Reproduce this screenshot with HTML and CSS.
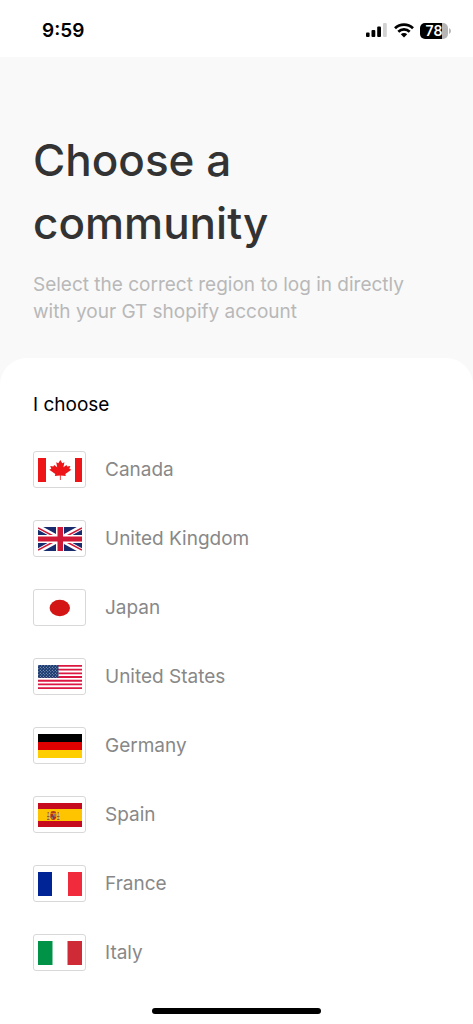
FILE: index.html
```html
<!DOCTYPE html>
<html lang="en">
<head>
<meta charset="utf-8">
<meta name="viewport" content="width=device-width, initial-scale=1">
<title>Choose a community</title>
<link rel="stylesheet" href="styles.css">
</head>
<body>
<div class="screen">
  <div class="status">
    <span class="time">9:59</span>
    <div class="status-icons">
      <svg class="signal" viewBox="0 0 22 15" aria-hidden="true"><rect x="0" y="9.5" width="3.6" height="4.5" rx="1"/><rect x="5.5" y="7" width="3.8" height="7" rx="1"/><rect x="11.2" y="3.5" width="3.8" height="10.5" rx="1"/><rect x="17" y="0" width="3.8" height="14" rx="1" fill="#d2d2d2"/></svg>
      <svg class="wifi" viewBox="0 0 20 15" aria-hidden="true"><g fill="none" stroke="#000" stroke-width="2.7"><path d="M1 5.2C6 .3 14 .3 19 5.2"/><path d="M4.3 8.7C7.5 5.6 12.5 5.6 15.7 8.7"/></g><path d="M6.8 11.2C8.5 9.6 11.5 9.6 13.2 11.2L10 14.5Z"/></svg>
      <div class="battery"><span class="level">78</span></div>
      <svg class="cap" viewBox="0 0 2 6" aria-hidden="true"><path d="M0 0Q2 1 2 3T0 6Z" fill="#b5b5b5"/></svg>
    </div>
  </div>
  <header class="intro">
    <h1>Choose a community</h1>
    <p>Select the correct region to log in directly with your GT shopify account</p>
  </header>
  <main class="panel">
    <h2>I choose</h2>
    <ul class="regions">
      <li><button type="button" class="region"><span class="flag"><svg viewBox="0 0 44 24" aria-hidden="true"><path fill="#ee1519" d="M0 0H8V24H0ZM37 0H44V24H37Z"/><path fill="#ee1519" d="M22.3 2L24.3 5.2 26.4 4.2 25.4 9.3 28.5 6.9 29.2 8.4 32.4 7.9 31.3 10.7 33.3 11.8 27.3 16.1 27.8 18.1 22.7 17.4V22H21.9V17.4L16.8 18.1 17.3 16.1 11.3 11.8 13.3 10.7 12.2 7.9 15.4 8.4 16.1 6.9 19.2 9.3 18.2 4.2 20.3 5.2Z"/></svg></span>Canada</button></li>
      <li><button type="button" class="region"><span class="flag"><svg viewBox="0 0 44 24" aria-hidden="true"><path fill="#172b6d" d="M0 0H44V24H0Z"/><path stroke="#fff" stroke-width="5" d="M0 0L44 24M44 0L0 24"/><path stroke="#cf1835" stroke-width="1.5" d="M0 1L19 11M25 13L44 23M44 1L25 11M19 13L0 23"/><path fill="#fff" d="M18 0H26V8H44V16H26V24H18V16H0V8H18Z"/><path fill="#cf1835" d="M19.5 0H25V9.5H44V14.5H25V24H19.5V14.5H0V9.5H19.5Z"/></svg></span>United Kingdom</button></li>
      <li><button type="button" class="region"><span class="flag"><svg viewBox="0 0 44 24" aria-hidden="true"><ellipse cx="21.8" cy="12" rx="10.2" ry="8.2" fill="#d31515"/></svg></span>Japan</button></li>
      <li><button type="button" class="region"><span class="flag"><svg viewBox="0 0 44 24" aria-hidden="true"><defs><pattern id="stars" width="3" height="3" patternUnits="userSpaceOnUse"><circle cx=".8" cy=".8" r=".5" fill="#c5cde0"/><circle cx="2.3" cy="2.3" r=".5" fill="#c5cde0"/></pattern></defs><path fill="#fff" d="M0 0H44V24H0Z"/><path stroke="#dc1742" stroke-width="1.85" d="M0 .92H44M0 4.62H44M0 8.31H44M0 12H44M0 15.7H44M0 19.4H44M0 23.08H44"/><path fill="#17386f" d="M0 0H20.5V12.9H0Z"/><path fill="url(#stars)" d="M0 0H20.5V12.9H0Z"/></svg></span>United States</button></li>
      <li><button type="button" class="region"><span class="flag"><svg viewBox="0 0 44 24" aria-hidden="true"><path d="M0 0H44V8H0Z"/><path fill="#df0000" d="M0 8H44V16H0Z"/><path fill="#ffce00" d="M0 16H44V24H0Z"/></svg></span>Germany</button></li>
      <li><button type="button" class="region"><span class="flag"><svg viewBox="0 0 44 24" aria-hidden="true"><path fill="#c60b1e" d="M0 0H44V24H0Z"/><path fill="#ffc400" d="M0 6H44V18H0Z"/><g><path stroke="#aaa075" stroke-width="1.2" d="M10.2 10V16M20.3 10V16"/><path stroke="#9c5a28" d="M9 13.5H11.5M19 13.5H21.5M9 16.5H11.5M19 16.5H21.5M9.5 9.7H11M19.5 9.7H21"/><path fill="#b33a22" d="M12.7 10L13 8.6 15.3 8 17.6 8.6 18 10Z"/><path fill="#b52b22" d="M12.4 10.5H18.2V14.5Q17.5 17 15.3 17T12.4 14.5Z"/><path fill="#d4a02a" d="M15.3 10.5H18.2V13.5H15.3Z"/><path fill="#8f7b70" d="M16 11H18V13H16ZM13.3 14H15V16H13.3Z"/><circle cx="15.3" cy="13.5" r="1" fill="#335592"/></g></svg></span>Spain</button></li>
      <li><button type="button" class="region"><span class="flag"><svg viewBox="0 0 44 24" aria-hidden="true"><path fill="#002395" d="M0 0H14V24H0Z"/><path fill="#f12b3c" d="M30 0H44V24H30Z"/></svg></span>France</button></li>
      <li><button type="button" class="region"><span class="flag"><svg viewBox="0 0 44 24" aria-hidden="true"><path fill="#009246" d="M0 0H14.5V24H0Z"/><path fill="#ce2b37" d="M29.5 0H44V24H29.5Z"/></svg></span>Italy</button></li>
    </ul>
  </main>
  <footer class="home-bar"><div class="home"></div></footer>
</div>
</body>
</html>
```
FILE: styles.css
```css
* { box-sizing: border-box; }
body { margin: 0; background: #fff; font-family: Inter, "Liberation Sans", sans-serif; }
.screen { min-height: 100vh; display: flex; flex-direction: column; background: #f9f9f9; }
.status { display: flex; align-items: center; justify-content: space-between; height: 57px; padding: 4px 22px 0 42px; background: #fff; }
.time { font-size: 19px; font-weight: 600; line-height: 24px; }
.status-icons { display: flex; align-items: center; }
.signal { width: 22px; height: 15px; margin-right: 6px; }
.wifi { width: 20px; height: 15px; margin-right: 6px; }
.battery { width: 28px; height: 16px; border-radius: 5px; overflow: hidden; background: linear-gradient(90deg, #000 78%, #b5b5b5 78%); color: #fff; }
.level { display: block; text-align: center; font-size: 14px; font-weight: 600; line-height: 16px; }
.cap { width: 2px; height: 6px; margin-left: 1px; }
.intro { padding: 72px 33px 33px; }
h1 { max-width: 300px; margin: 0 0 16px; color: #333; font-size: 44px; font-weight: 500; line-height: 63px; }
.intro p { margin: 0; color: #b8b8b8; font-size: 19px; font-weight: 400; line-height: 27px; }
.panel { flex: 1; padding: 34px 33px 0; border-radius: 27px 27px 0 0; background: #fff; }
h2 { margin: 0; color: #000; font-size: 19px; font-weight: 400; line-height: 26px; }
.regions { margin: 17px 0 0; padding: 0; list-style: none; }
.region { display: flex; align-items: center; gap: 19px; width: 100%; height: 69px; padding: 0; border: 0; background: none; color: #888; font: 400 19px/26px Inter, "Liberation Sans", sans-serif; text-align: left; cursor: pointer; }
.flag { display: flex; align-items: center; justify-content: center; width: 53px; height: 37px; border: 1px solid #d8d8d8; border-radius: 3px; background: #fff; }
.flag svg { width: 44px; height: 24px; }
.home-bar { padding: 16px 0 10px; background: #fff; }
.home { width: 169px; height: 6px; margin: 0 auto; border-radius: 3px; background: #000; }
```
